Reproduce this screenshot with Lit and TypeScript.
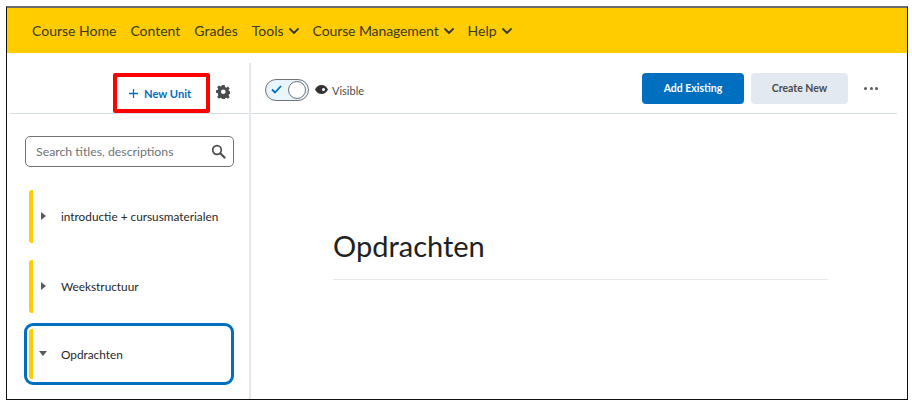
import { LitElement, html, css } from "lit";
import { customElement } from "lit/decorators.js";

const chev = html`<svg class="chev" viewBox="0 0 10 6" width="10" height="6"><path d="M1 1l4 4 4-4" fill="none" stroke="#3a3a3a" stroke-width="1.800" stroke-linecap="round" stroke-linejoin="round"/></svg>`;

@customElement("app-root")
export class AppRoot extends LitElement {
  static styles = css`
    :host { display: block; width: 912px; height: 409px; background: #fff; font-family: Lato, "Open Sans", sans-serif; color: #202122; overflow: hidden; }
    .frame { box-sizing: border-box; margin: 6px 0 0 6px; width: 902px; height: 394px; border: 1.5px solid #111; border-top: 2px solid #6b6b6b; display: flex; flex-direction: column; }
    .nav { height: 45px; flex: none; background: #ffcc00; display: flex; align-items: center; padding: 0 0 0 25px; gap: 14px; font-size: 14px; color: #3a3a2a; box-sizing: border-box; }
    .nav span { display: flex; align-items: center; gap: 5px; white-space: nowrap; }
    .nav span.long { letter-spacing: -0.1px; }
    .main { flex: 1; display: flex; min-height: 0; padding-top: 10px; }
    .side { width: 244px; flex: none; box-sizing: border-box; border-right: 2px solid #e3e9f1; display: flex; flex-direction: column; padding-left: 3px; }
    .side-head { height: 51px; flex: none; box-sizing: border-box; border-bottom: 1px solid #d9dfe8; display: flex; align-items: flex-start; padding: 10px 0 0 103px; gap: 6px; }
    .newunit { box-sizing: border-box; width: 97px; height: 40px; border: 4px solid #f00; border-radius: 2px; display: flex; align-items: center; justify-content: flex-start; padding-left: 12px; gap: 6px; color: #006fbf; font-size: 11.200px; font-weight: 700; }
    .gear { margin-top: 12px; }
    .search { box-sizing: border-box; margin: 22px 0 0 15px; width: 209px; height: 31px; border: 1px solid #6e7477; border-radius: 5px; display: flex; align-items: center; justify-content: space-between; padding: 0 7px 0 10px; font-size: 12.300px; color: #6e7477; flex: none; }
    .units { display: flex; flex-direction: column; margin: 23px 0 0 15px; gap: 17px; }
    .unit { box-sizing: border-box; width: 209px; height: 53px; display: flex; align-items: center; font-size: 11.800px; color: #26282a; }
    .bar { width: 4px; height: 53px; margin-left: 4px; background: #ffcc00; border-radius: 3px 0 0 3px; flex: none; }
    .tw { width: 28px; display: flex; justify-content: flex-start; padding-left: 8px; box-sizing: border-box; flex: none; margin-top: -1px; }
    .unit.sel { height: 62px; width: 210px; border: 3px solid #006fbf; border-radius: 9px; margin: -7px 0 0 -1px; }
    .unit.sel .bar { margin-left: 2px; height: 50px; }
    .unit.sel .tw { padding-left: 6px; }
    .content { flex: 1; display: flex; flex-direction: column; min-width: 0; }
    .toolbar { height: 51px; flex: none; box-sizing: border-box; border-bottom: 1px solid #d9dfe8; margin-right: 10px; display: flex; align-items: center; padding: 0 0 0 14px; }
    .toggle { box-sizing: border-box; width: 44px; height: 22px; border: 1.500px solid #6e7477; border-radius: 11px; background: #e8f5fd; display: flex; align-items: center; justify-content: space-between; padding: 0 0 0 5px; margin-top: 3px; }
    .knob { box-sizing: border-box; width: 18px; height: 18px; border-radius: 50%; border: 1.500px solid #6e7477; background: #fff; margin-right: 2px; }
    .eye { margin: 3px 4px 0 6px; }
    .vis { font-size: 11px; color: #494c4e; margin-top: 4px; }
    .spacer { flex: 1; }
    .btn { box-sizing: border-box; height: 31px; border-radius: 4px; display: flex; align-items: center; justify-content: center; font-size: 10.500px; font-weight: 700; }
    .primary { width: 102px; background: #006fbf; color: #fff; }
    .sec { width: 97px; margin-left: 7px; background: #e3e9f1; color: #494c4e; }
    .more { width: 49px; display: flex; justify-content: center; gap: 2.500px; padding-right: 3px; box-sizing: border-box; }
    .more i { width: 3px; height: 3px; border-radius: 50%; background: #565a5c; }
    .page { padding: 114px 0 0 82px; }
    h1 { margin: 0; width: 495px; box-sizing: border-box; font-size: 29px; font-weight: 400; line-height: 36px; color: #202122; padding-bottom: 15px; border-bottom: 1px solid #e6e8ea; }
  `;

  render() {
    return html`<div class="frame">
      <div class="nav">
        <span>Course Home</span><span>Content</span><span>Grades</span><span>Tools ${chev}</span><span class="long">Course Management ${chev}</span><span>Help ${chev}</span>
      </div>
      <div class="main">
        <div class="side">
          <div class="side-head">
            <div class="newunit">
              <svg width="9" height="9" viewBox="0 0 10 10"><path d="M5 0v10M0 5h10" stroke="#006fbf" stroke-width="1.400"/></svg>
              <span>New Unit</span>
            </div>
            <svg class="gear" width="14" height="14" viewBox="0 0 24 24"><path fill="#4a4c4e" fill-rule="evenodd" d="M14.500 1l.6 3.100 2.200.9 2.600-1.800 3 3-1.800 2.600.9 2.200 3 .5v4.200l-3 .6-.9 2.200 1.800 2.600-3 3-2.600-1.800-2.200.9-.6 3H9.900l-.6-3-2.200-.9-2.600 1.800-3-3 1.800-2.600L2.400 14.300 -.5 13.700V9.500l2.900-.5.9-2.200L1.500 4.200l3-3 2.600 1.800 2.200-.9.600-3.100zM12 8a4 4 0 1 0 0 8 4 4 0 0 0 0-8z" transform="translate(0.500 -0.500)"/></svg>
          </div>
          <div class="search">
            <span>Search titles, descriptions</span>
            <svg width="15" height="15" viewBox="0 0 15 15"><circle cx="6" cy="6" r="4.300" fill="none" stroke="#494c4e" stroke-width="1.700"/><path d="M9.500 9.500l4 4" stroke="#494c4e" stroke-width="2.200" stroke-linecap="round"/></svg>
          </div>
          <div class="units">
            <div class="unit"><div class="bar"></div><div class="tw"><svg width="5" height="8" viewBox="0 0 5 8"><path d="M0 0l5 4-5 4z" fill="#565a5c"/></svg></div>introductie + cursusmaterialen</div>
            <div class="unit"><div class="bar"></div><div class="tw"><svg width="5" height="8" viewBox="0 0 5 8"><path d="M0 0l5 4-5 4z" fill="#565a5c"/></svg></div>Weekstructuur</div>
            <div class="unit sel"><div class="bar"></div><div class="tw"><svg width="8" height="5" viewBox="0 0 8 5"><path d="M0 0h8l-4 5z" fill="#565a5c"/></svg></div>Opdrachten</div>
          </div>
        </div>
        <div class="content">
          <div class="toolbar">
            <div class="toggle">
              <svg width="11" height="9" viewBox="0 0 11 9"><path d="M1 4.500l3 3 6-6.500" fill="none" stroke="#006fbf" stroke-width="1.800"/></svg>
              <div class="knob"></div>
            </div>
            <svg class="eye" width="13" height="9" viewBox="0 0 13 9"><path fill-rule="evenodd" fill="#333" d="M6.500 0C3.500 0 1.200 2 0 4.500 1.200 7 3.500 9 6.500 9s5.300-2 6.500-4.500C11.800 2 9.500 0 6.500 0zM8.500 3a1.500 1.500 0 1 0 0 3 1.500 1.500 0 0 0 0-3z"/></svg>
            <span class="vis">Visible</span>
            <div class="spacer"></div>
            <div class="btn primary">Add Existing</div>
            <div class="btn sec">Create New</div>
            <div class="more"><i></i><i></i><i></i></div>
          </div>
          <div class="page"><h1>Opdrachten</h1></div>
        </div>
      </div>
    </div>`;
  }
}
